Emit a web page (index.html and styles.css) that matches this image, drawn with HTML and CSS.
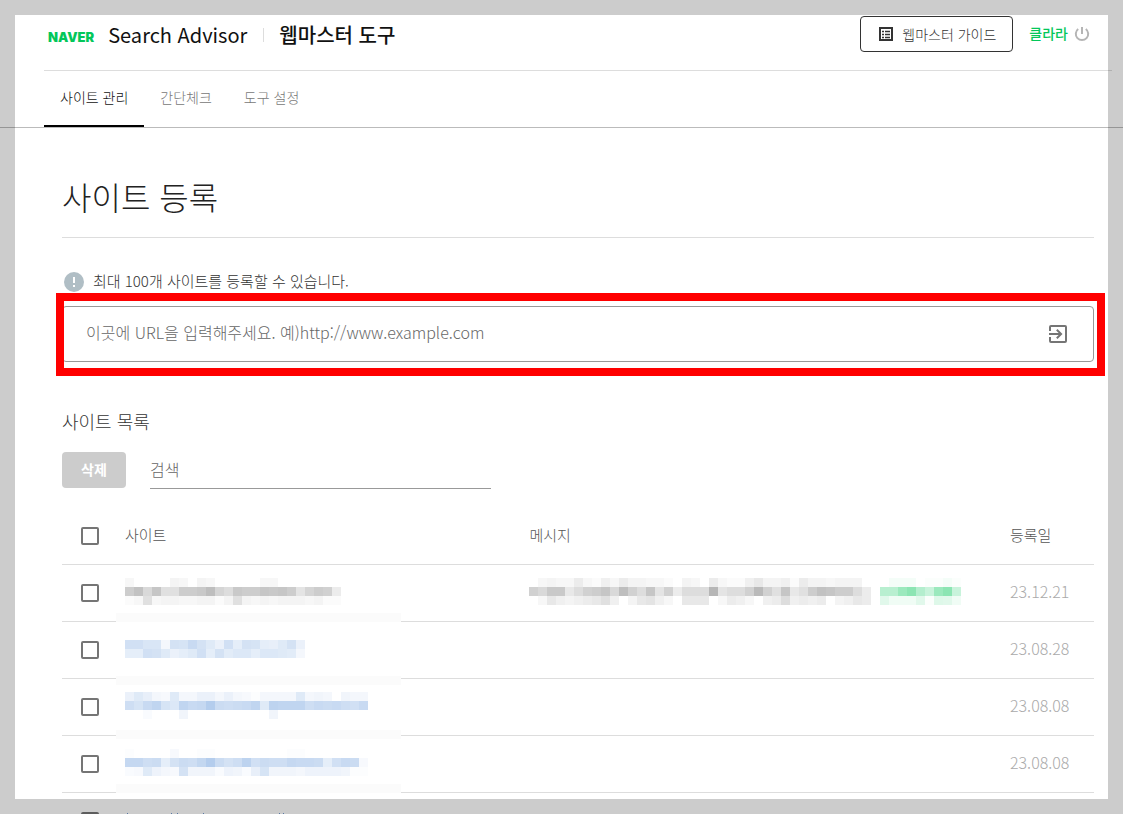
FILE: index.html
```
<!DOCTYPE html>
<html lang="ko">
<head>
    <meta charset="UTF-8">
    <meta name="viewport" content="width=device-width, initial-scale=1.0">
    <title>웹마스터 도구</title>
    <link rel="stylesheet" href="styles.css">
</head>
<body>
    <div class="page">
        <header class="header">
            <a href="#" class="logo">NAVER</a>
            <a href="#" class="service">Search Advisor</a>
            <a href="#" class="tool">웹마스터 도구</a>
            <div class="header-right">
                <button class="guide-btn">
                    <svg width="16" height="16" viewBox="0 0 16 16" fill="none" stroke="#333">
                        <rect x="2" y="2" width="12" height="12" stroke-width="2"/>
                        <path d="M4 5.5h2M7 5.5h5M4 8.5h2M7 8.5h5M4 11.5h2M7 11.5h5" stroke-width="1.4"/>
                    </svg>
                    웹마스터 가이드
                </button>
                <a href="#" class="user">클라라</a>
                <button class="power-btn" aria-label="로그아웃">
                    <svg width="16" height="16" viewBox="0 0 16 16" fill="none" stroke="#b5b5b5" stroke-width="2">
                        <path d="M8 1v7M4.2 3A6.2 6.2 0 1 0 11.8 3"/>
                    </svg>
                </button>
            </div>
        </header>

        <nav class="tabs">
            <a href="#" class="tab active">사이트 관리</a>
            <a href="#" class="tab">간단체크</a>
            <a href="#" class="tab">도구 설정</a>
        </nav>

        <main class="content">
            <h1>사이트 등록</h1>

            <p class="notice">
                <svg width="20" height="20" viewBox="0 0 20 20">
                    <circle cx="10" cy="10" r="10" fill="#b0bec5"/>
                    <path d="M10 5v6M10 13v2" stroke="#fff" stroke-width="2"/>
                </svg>
                <span>최대 100개 사이트를 등록할 수 있습니다.</span>
            </p>
            <div class="url-box">
                <input type="text" class="url-input" aria-label="사이트 URL" placeholder="이곳에 URL을 입력해주세요. 예)http://www.example.com">
                <button class="url-submit" aria-label="등록">
                    <svg width="24" height="24" viewBox="0 0 24 24" fill="#757575">
                        <path d="M10.1 15.6L11.5 17l5-5-5-5-1.4 1.4 2.6 2.6H3v2h9.7l-2.6 2.6zM19 3H5a2 2 0 0 0-2 2v4h2V5h14v14H5v-4H3v4a2 2 0 0 0 2 2h14a2 2 0 0 0 2-2V5a2 2 0 0 0-2-2z"/>
                    </svg>
                </button>
                <div class="highlight"></div>
            </div>

            <h2>사이트 목록</h2>
            <div class="toolbar">
                <button class="delete-btn" disabled>삭제</button>
                <input type="text" class="search-input" aria-label="검색" placeholder="검색">
            </div>

            <table class="site-table">
                <colgroup>
                    <col class="col-check">
                    <col class="col-site">
                    <col>
                    <col class="col-date">
                </colgroup>
                <thead>
                    <tr>
                        <td><input type="checkbox" aria-label="전체 선택"></td>
                        <th>사이트</th>
                        <th class="msg">메시지</th>
                        <th>등록일</th>
                    </tr>
                </thead>
                <tbody>
                    <tr>
                        <td><input type="checkbox" aria-label="사이트 1"></td>
                        <td>
                            <svg class="mosaic gray" data-rows="200003203200000220000000 dgaf88ddehb9eddfefd7bdc5 128233223313832323332311"></svg>
                            <span class="strip"></span>
                        </td>
                        <td class="msg">
                            <div class="message">
                                <svg class="mosaic gray" data-rows="02322521425332210320521146334153323330 caee69cdfahc9f7c5999j799cic8f68dgfdd95 02643456840367420666025420459454503465"></svg>
                                <svg class="mosaic green" data-rows="033301131 jjrvkfrvf 844481984"></svg>
                            </div>
                        </td>
                        <td class="date">23.12.21</td>
                    </tr>
                    <tr>
                        <td><input type="checkbox" aria-label="사이트 2"></td>
                        <td>
                            <svg class="mosaic blue" data-rows="ggdd4fejfb7g9fe98bf7 99gfb79bg9facc9ccba4"></svg>
                            <span class="strip strip-low"></span>
                        </td>
                        <td></td>
                        <td class="date">23.08.28</td>
                    </tr>
                    <tr>
                        <td><input type="checkbox" aria-label="사이트 3"></td>
                        <td>
                            <svg class="mosaic blue" data-rows="7b843b4477474314444b4540544 hejmecmjkqihijmbnmmmhjijhgj 002000500000000050000000000"></svg>
                            <span class="strip strip-mid"></span>
                        </td>
                        <td></td>
                        <td class="date">23.08.08</td>
                    </tr>
                    <tr>
                        <td><input type="checkbox" aria-label="사이트 4"></td>
                        <td>
                            <svg class="mosaic blue" data-rows="100003001100000000110000000 kkhi9fihlqifhngihhkjji9gji3 23b643f55526528e55546666511"></svg>
                            <span class="strip"></span>
                        </td>
                        <td></td>
                        <td class="date">23.08.08</td>
                    </tr>
                    <tr>
                        <td><input type="checkbox" aria-label="사이트 5"></td>
                        <td>
                            <svg width="180" height="32" viewBox="0 0 180 32" stroke="#6f96cc">
                                <path d="M2.5 8v16M46.5 8v16M52.5 8v16M78.5 8v16M154.5 8v16M158.5 8v16"/>
                            </svg>
                        </td>
                        <td></td>
                        <td class="date">23.08.08</td>
                    </tr>
                </tbody>
            </table>
        </main>
        <div class="frame"></div>
    </div>

    <script>
        // 모자이크: 한 글자가 9px 한 칸, 값(36진수)이 클수록 진하다
        const CELL = 9;
        document.querySelectorAll('.mosaic').forEach(svg => {
            const rows = svg.dataset.rows.split(' ');
            svg.setAttribute('width', rows[0].length * CELL);
            svg.setAttribute('height', rows.length * CELL);
            rows.forEach((row, y) => {
                for (let x = 0; x < row.length; x++) {
                    const rect = document.createElementNS('http://www.w3.org/2000/svg', 'rect');
                    rect.setAttribute('x', x * CELL);
                    rect.setAttribute('y', y * CELL);
                    rect.setAttribute('width', CELL);
                    rect.setAttribute('height', CELL);
                    rect.setAttribute('fill-opacity', parseInt(row[x], 36) * 0.015);
                    svg.appendChild(rect);
                }
            });
        });
    </script>
</body>
</html>
```
FILE: styles.css
```
* {
    box-sizing: border-box;
}
body {
    margin: 0;
    font-family: "Noto Sans CJK KR", sans-serif;
    font-weight: 300;
    font-size: 14px;
    color: #333;
    background-color: #fff;
}
a {
    color: inherit;
    text-decoration: none;
}
button,
input {
    font: inherit;
    color: inherit;
}
button {
    padding: 0;
    border: none;
    background: none;
    cursor: pointer;
}
svg {
    display: block;
    flex: none;
}
.page {
    height: 100vh;
    overflow: hidden;
}
.frame {
    position: fixed;
    inset: 0;
    z-index: 2;
    border: 15px solid rgba(0, 0, 0, 0.2);
    pointer-events: none;
}

/* header */
.header {
    display: flex;
    align-items: center;
    height: 71px;
    margin: 0 11px 0 44px;
    padding: 0 22px 0 4px;
    border-bottom: 1px solid #ddd;
}
.logo {
    padding-top: 4px;
    font-family: Inter, sans-serif;
    font-weight: 900;
    font-size: 13px;
    color: #03c75a;
}
.service,
.tool {
    font-size: 20px;
    line-height: 20px;
    font-weight: 500;
    color: #111;
}
.service {
    margin-left: 14px;
    font-weight: 400;
}
.tool {
    margin-left: 16px;
    padding-left: 16px;
    background: linear-gradient(#ddd, #ddd) left center / 1px 14px no-repeat;
}
.header-right {
    display: flex;
    align-items: center;
    margin-left: auto;
    padding-bottom: 2px;
}
.guide-btn {
    display: flex;
    align-items: center;
    gap: 8px;
    height: 36px;
    padding: 0 16px 0 17px;
    border: 1px solid #333;
    border-radius: 4px;
}
.user {
    margin: 0 6px 0 16px;
    padding-bottom: 2px;
    font-weight: 500;
    color: #03c75a;
}

/* tabs */
.tabs {
    display: flex;
    height: 57px;
    padding-left: 44px;
    border-bottom: 1px solid #bbb;
}
.tab {
    padding: 0 16px;
    line-height: 53px;
    color: #777;
}
.tab.active {
    color: #111;
    border-bottom: 2px solid #000;
}

/* content */
.content {
    padding: 0 29px 0 62px;
}
h1 {
    margin: 0 0 34px;
    padding: 45px 0 17px;
    font-size: 32px;
    line-height: 47px;
    font-weight: 300;
    color: #222;
    border-bottom: 1px solid #ddd;
}
.notice {
    display: flex;
    align-items: center;
    gap: 9px;
    margin: 0 0 14px;
    padding-left: 2px;
    font-size: 15px;
    line-height: 18px;
}
.notice span {
    padding-bottom: 2px;
}
.url-box {
    position: relative;
    display: flex;
    align-items: center;
    height: 56px;
    padding: 0 23px;
    border: 1px solid #999;
    border-radius: 4px;
}
.url-input {
    flex: 1;
    min-width: 0;
    padding: 0 0 4px;
    border: none;
    outline: none;
    font-size: 16px;
    background: none;
}
.url-input::placeholder,
.search-input::placeholder {
    color: #666;
    opacity: 1;
}
.highlight {
    position: absolute;
    inset: -14px -12px -15px -7px;
    border: 8px solid #f00;
    pointer-events: none;
}
h2 {
    margin: 45px 0 17px;
    font-size: 18px;
    line-height: 28px;
    font-weight: 300;
}
.toolbar {
    display: flex;
    gap: 24px;
    margin-bottom: 19px;
}
.delete-btn {
    width: 64px;
    height: 36px;
    padding-bottom: 2px;
    border-radius: 4px;
    font-weight: 700;
    color: #fff;
    background-color: #ccc;
}
.search-input {
    width: 33%;
    height: 37px;
    padding: 0 0 2px;
    border: none;
    border-bottom: 1px solid #999;
    outline: none;
    font-size: 16px;
}

/* table */
.site-table {
    width: 100%;
    table-layout: fixed;
    border-spacing: 0;
}
.col-check {
    width: 63px;
}
.col-site {
    width: 39%;
}
.col-date {
    width: 84px;
}
.site-table th,
.site-table td {
    position: relative;
    height: 57px;
    padding: 0;
    border-bottom: 1px solid #ddd;
    text-align: left;
    vertical-align: middle;
}
.site-table th {
    padding-bottom: 4px;
    font-size: 15px;
    font-weight: 300;
    color: #555;
}
.site-table .msg {
    padding-left: 2px;
}
.site-table .date {
    padding-bottom: 5px;
    font-size: 16px;
    color: #aaa;
}
.site-table input {
    appearance: none;
    display: block;
    width: 18px;
    height: 18px;
    margin: 0 0 0 19px;
    border: 2px solid #757575;
    border-radius: 2px;
}
.message {
    display: flex;
    gap: 9px;
}
.mosaic {
    margin-bottom: 3px;
    shape-rendering: crispEdges;
}
.gray {
    fill: #000;
}
.blue {
    fill: #3f7fd0;
}
.green {
    fill: #08c85c;
}
/* pale band painted over the row line */
.strip {
    position: absolute;
    left: -9px;
    bottom: -1px;
    z-index: 1;
    width: 285px;
    height: 9px;
    background-color: #fbfbfb;
}
.strip-mid {
    bottom: -4px;
}
.strip-low {
    bottom: -7px;
}
```
